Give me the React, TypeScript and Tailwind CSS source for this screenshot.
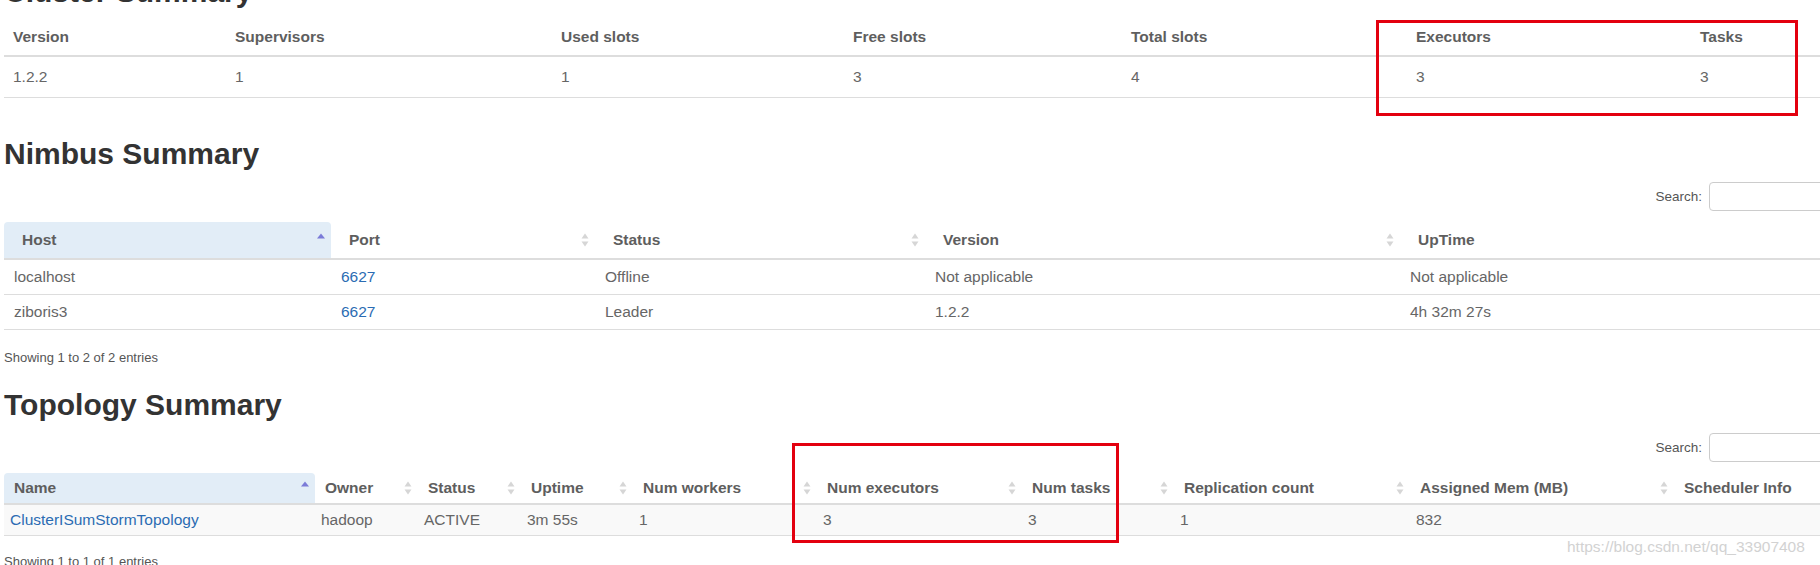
import React from "react";

type Col = { label: string; w: string; sorted?: boolean };

function SortIcon({ sorted }: { sorted?: boolean }) {
  return (
    <svg
      className="absolute right-[6px] top-1/2 -translate-y-1/2"
      width="8"
      height="15"
      viewBox="0 0 8 15"
    >
      {sorted ? (
        <polygon points="4,1 8,6 0,6" fill="#7b7bd8" />
      ) : (
        <>
          <polygon points="4,1 7.5,6 0.5,6" fill="#d6d6d6" />
          <polygon points="0.5,9 7.5,9 4,14" fill="#d6d6d6" />
        </>
      )}
    </svg>
  );
}

function SearchBox() {
  return (
    <div className="flex items-center justify-end">
      <span className="mr-[7px] text-[13.5px] text-[#555]">Search:</span>
      <input className="h-[29px] w-[143px] rounded-[4px] border border-[#ccc] bg-white" />
    </div>
  );
}

const clusterCols = [
  { label: "Version", w: "w-[222px]", v: "1.2.2" },
  { label: "Supervisors", w: "w-[326px]", v: "1" },
  { label: "Used slots", w: "w-[292px]", v: "1" },
  { label: "Free slots", w: "w-[278px]", v: "3" },
  { label: "Total slots", w: "w-[285px]", v: "4" },
  { label: "Executors", w: "w-[284px]", v: "3" },
  { label: "Tasks", w: "w-[161px]", v: "3" },
];

const nimbusCols: Col[] = [
  { label: "Host", w: "w-[327px]", sorted: true },
  { label: "Port", w: "w-[264px]" },
  { label: "Status", w: "w-[330px]" },
  { label: "Version", w: "w-[475px]" },
  { label: "UpTime", w: "w-[452px]" },
];

const nimbusRows = [
  ["localhost", "6627", "Offline", "Not applicable", "Not applicable"],
  ["ziboris3", "6627", "Leader", "1.2.2", "4h 32m 27s"],
];

const topoCols: Col[] = [
  { label: "Name", w: "w-[311px]", sorted: true },
  { label: "Owner", w: "w-[103px]" },
  { label: "Status", w: "w-[103px]" },
  { label: "Uptime", w: "w-[112px]" },
  { label: "Num workers", w: "w-[184px]" },
  { label: "Num executors", w: "w-[205px]" },
  { label: "Num tasks", w: "w-[152px]" },
  { label: "Replication count", w: "w-[236px]" },
  { label: "Assigned Mem (MB)", w: "w-[264px]" },
  { label: "Scheduler Info", w: "w-[178px]" },
];

const topoRow = ["ClusterISumStormTopology", "hadoop", "ACTIVE", "3m 55s", "1", "3", "3", "1", "832", ""];

const title = "text-[30px] leading-[33px] font-bold text-[#333]";

export default function App() {
  return (
    <div className="relative h-[565px] w-[1820px] overflow-hidden bg-white font-['Liberation_Sans',Arial,sans-serif] text-[15.5px] leading-[22px] text-[#666]">
      <div className="w-[1852px] pl-[4px]">
        {/* Cluster */}
        <h2 className={`-mt-[25px] ${title}`}>Cluster Summary</h2>
        <table className="mt-[7px] w-[1848px] table-fixed border-separate border-spacing-0">
          <thead>
            <tr>
              {clusterCols.map((c) => (
                <th
                  key={c.label}
                  className={`${c.w} border-b-2 border-[#ddd] px-[9px] pt-[11px] pb-[7px] text-left font-bold text-[#5e5e5e]`}
                >
                  {c.label}
                </th>
              ))}
            </tr>
          </thead>
          <tbody>
            <tr>
              {clusterCols.map((c) => (
                <td key={c.label} className="border-b border-[#ddd] px-[9px] py-[9px]">
                  {c.v}
                </td>
              ))}
            </tr>
          </tbody>
        </table>

        {/* Nimbus */}
        <h2 className={`mt-[39px] ${title}`}>Nimbus Summary</h2>
        <div className="mt-[12px]">
          <SearchBox />
        </div>
        <table className="mt-[11px] w-[1848px] table-fixed border-separate border-spacing-0">
          <thead>
            <tr>
              {nimbusCols.map((c) => (
                <th
                  key={c.label}
                  className={`${c.w} relative border-b-2 border-[#ddd] py-[7px] pl-[18px] pr-[20px] text-left font-bold text-[#5e5e5e] ${
                    c.sorted ? "rounded-t-[4px] bg-[#e2edf7]" : ""
                  }`}
                >
                  {c.label}
                  <SortIcon sorted={c.sorted} />
                </th>
              ))}
            </tr>
          </thead>
          <tbody>
            {nimbusRows.map((r, i) => (
              <tr key={i}>
                {r.map((v, j) => (
                  <td key={j} className="border-b border-[#ddd] py-[6px] pl-[10px]">
                    {j === 1 ? <a className="text-[#2b6cb3]">{v}</a> : v}
                  </td>
                ))}
              </tr>
            ))}
          </tbody>
        </table>
        <div className="mt-[18px] text-[13px] leading-[20px] text-[#555]">Showing 1 to 2 of 2 entries</div>

        {/* Topology */}
        <h2 className={`mt-[20px] ${title}`}>Topology Summary</h2>
        <div className="mt-[12px]">
          <SearchBox />
        </div>
        <table className="mt-[11px] w-[1848px] table-fixed border-separate border-spacing-0">
          <thead>
            <tr>
              {topoCols.map((c) => (
                <th
                  key={c.label}
                  className={`${c.w} relative whitespace-nowrap border-b-2 border-[#ddd] py-[4px] pl-[10px] text-left font-bold text-[#5e5e5e] ${
                    c.sorted ? "rounded-t-[4px] bg-[#e2edf7]" : ""
                  }`}
                >
                  {c.label}
                  <SortIcon sorted={c.sorted} />
                </th>
              ))}
            </tr>
          </thead>
          <tbody>
            <tr className="bg-[#f9f9f9]">
              {topoRow.map((v, j) => (
                <td key={j} className="border-b border-[#ddd] py-[4px] pl-[6px]">
                  {j === 0 ? <a className="text-[#2b6cb3]">{v}</a> : v}
                </td>
              ))}
            </tr>
          </tbody>
        </table>
        <div className="mt-[16px] text-[13px] leading-[20px] text-[#555]">Showing 1 to 1 of 1 entries</div>
      </div>

      {/* annotations */}
      <div className="pointer-events-none absolute left-[1376px] top-[20px] h-[96px] w-[422px] border-[3px] border-[#e3000f]" />
      <div className="pointer-events-none absolute left-[792px] top-[443px] h-[100px] w-[327px] border-[3px] border-[#e3000f]" />
      <div className="pointer-events-none absolute left-[1567px] top-[536px] text-[15.5px] leading-[22px] text-[#d2d2d2]">
        https://blog.csdn.net/qq_33907408
      </div>
    </div>
  );
}
